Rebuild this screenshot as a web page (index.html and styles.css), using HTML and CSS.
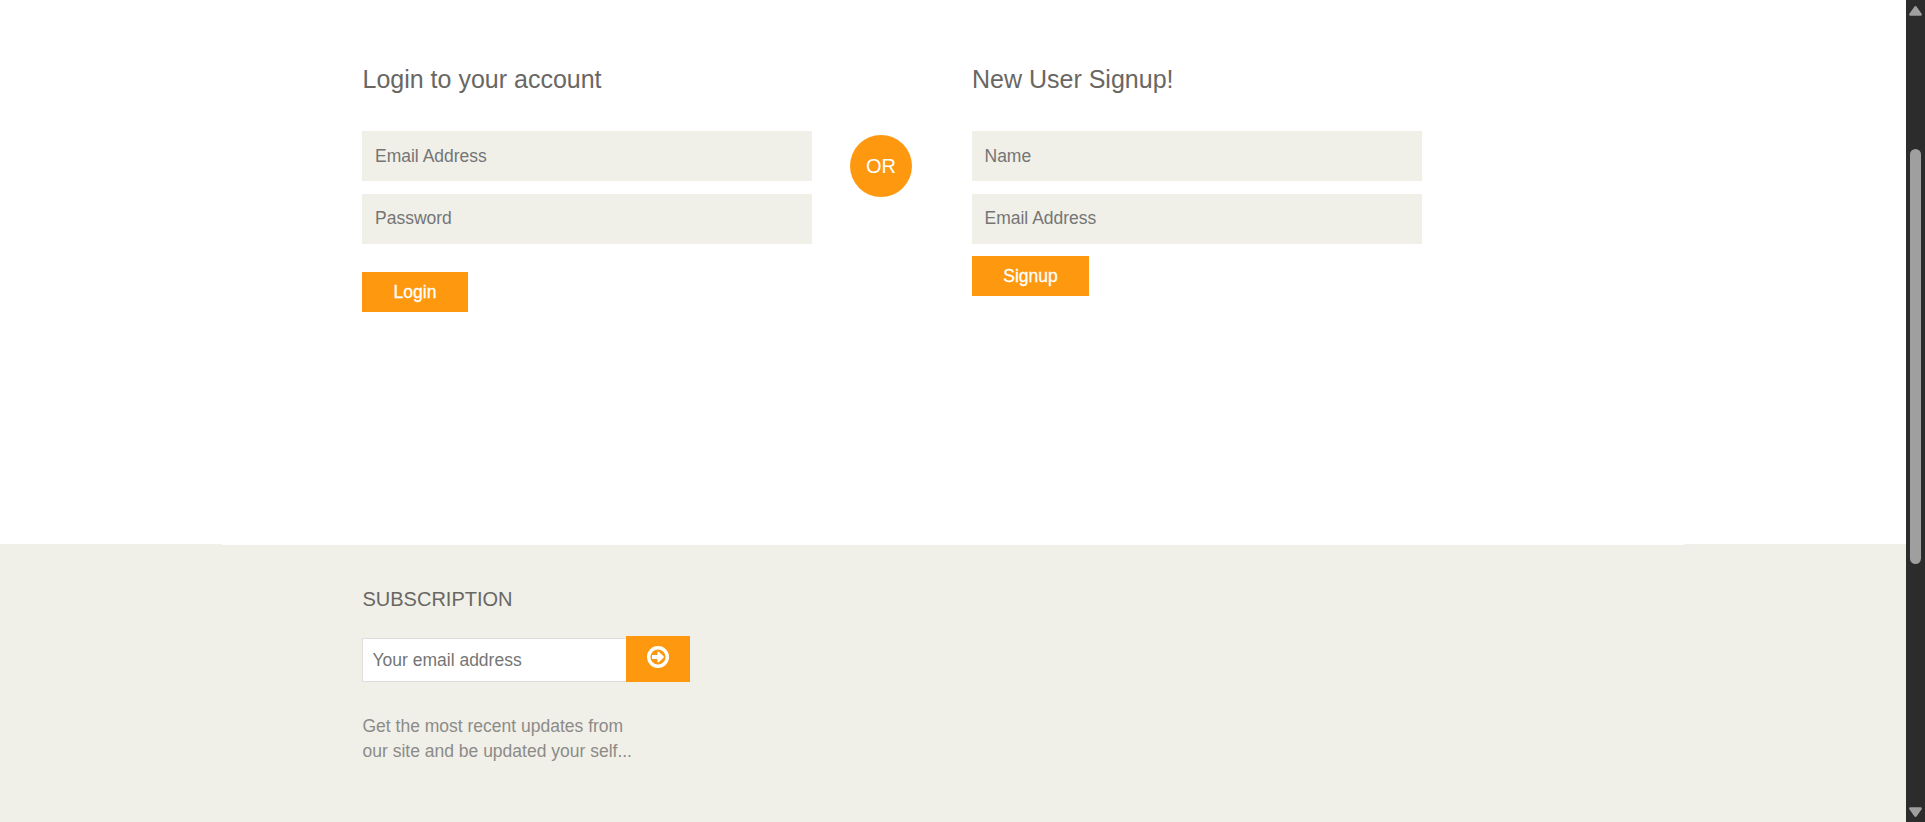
FILE: index.html
```html
<!DOCTYPE html>
<html lang="en">
<head>
<meta charset="utf-8">
<title>Signup / Login</title>
<link rel="stylesheet" href="styles.css">
</head>
<body>
<div class="page">
  <div class="content">
    <main class="forms">
      <form class="form login">
        <h2>Login to your account</h2>
        <input class="first" type="email" placeholder="Email Address">
        <input type="password" placeholder="Password">
        <button type="button">Login</button>
      </form>
      <div class="or">OR</div>
      <form class="form signup">
        <h2>New User Signup!</h2>
        <input class="first" type="text" placeholder="Name">
        <input type="email" placeholder="Email Address">
        <button type="button">Signup</button>
      </form>
    </main>
    <footer class="footer">
      <div class="edge"></div>
      <div class="subscription">
        <h2>Subscription</h2>
        <form class="subscribe">
          <input type="email" placeholder="Your email address">
          <button type="button" aria-label="Subscribe">
            <svg width="22" height="22" viewBox="0 0 22 22"><circle cx="11" cy="11" r="9.3" fill="none" stroke="#fff" stroke-width="3.4"/><path d="M5 8.9h5.5V6.4q0-1.5 1.2-.6l4.9 4.5q.8.7 0 1.4l-4.9 4.5q-1.2.9-1.2-.6v-2.5H5z" fill="#fff"/></svg>
          </button>
        </form>
        <p>Get the most recent updates from<br>our site and be updated your self...</p>
      </div>
    </footer>
  </div>
  <div class="scrollbar">
    <svg width="13" height="10" viewBox="0 0 13 10"><path d="M5.3.8q1.2-1.6 2.4 0l4.9 7q.8 2-1 2H1.4q-1.8 0-1-2z" fill="#9f9f9f"/></svg>
    <div class="thumb"></div>
    <svg class="down" width="13" height="10" viewBox="0 0 13 10"><path d="M5.3 9.2q1.2 1.6 2.4 0l4.9-7q.8-2-1-2H1.4q-1.8 0-1 2z" fill="#9f9f9f"/></svg>
  </div>
</div>
</body>
</html>
```
FILE: styles.css
```css
* { box-sizing: border-box; }
body { margin: 0; background: #fff; overflow: hidden; font-family: "Liberation Sans", Arial, sans-serif; }
h2, p { margin: 0; font-weight: 400; }
input, button { display: block; font: inherit; border: 0; border-radius: 0; outline: 0; }
::placeholder { color: #757575; opacity: 1; }
.page { display: flex; height: 822px; }
.content { display: flex; flex-direction: column; width: 1906px; }
.forms { display: flex; align-items: flex-start; height: 544px; padding: 65px 0 0 362px; }
.form { width: 450px; font-size: 17.5px; }
.form h2 { height: 66px; font-size: 25px; line-height: 29px; color: #696763; }
.form input { width: 100%; height: 50px; margin-bottom: 13px; padding: 0 0 1px 12.5px; background: #f0f0e9; }
.form .first { padding-top: 1px; padding-bottom: 0; }
.form button { height: 40px; padding: 0; color: #fff; background: #fe980f; -webkit-text-stroke: .3px #fff; }
.login h2 { padding-left: .5px; }
.login input { padding-left: 13px; }
.login button { width: 106px; margin-top: 28px; }
.signup button { width: 117px; margin-top: -1px; }
.or { width: 62px; height: 62px; margin: 70px 60px 0 38px; border-radius: 50%; background: #fe980f; color: #fff; font-size: 20px; line-height: 62px; text-align: center; }
.footer { flex: 1; background: #f0f0e9; }
.edge { width: 1462px; height: 1px; margin-left: 222px; background: #fff; }
.subscription { padding: 42px 0 0 362px; }
.subscription h2 { height: 49px; padding-left: .5px; font-size: 20px; line-height: 24px; text-transform: uppercase; color: #696763; }
.subscribe { display: flex; align-items: flex-end; font-size: 17.5px; }
.subscribe input { width: 264px; height: 44px; padding: 0 9.5px; border: 1px solid #ddd; border-right: 0; background: #fff; }
.subscribe button { width: 64px; height: 46px; padding: 10px 21px 14px; background: #fe980f; }
.subscribe svg { display: block; }
.subscription p { margin-top: 32px; padding-left: .5px; font-size: 17.5px; line-height: 25px; color: #8c8b88; }
.scrollbar { display: flex; flex-direction: column; align-items: center; width: 19px; padding: 6px 0 5px; background: #2c2c2c; }
.thumb { width: 11px; height: 415px; margin-top: 133px; border-radius: 6px; background: #9f9f9f; }
.down { margin-top: auto; }
```
